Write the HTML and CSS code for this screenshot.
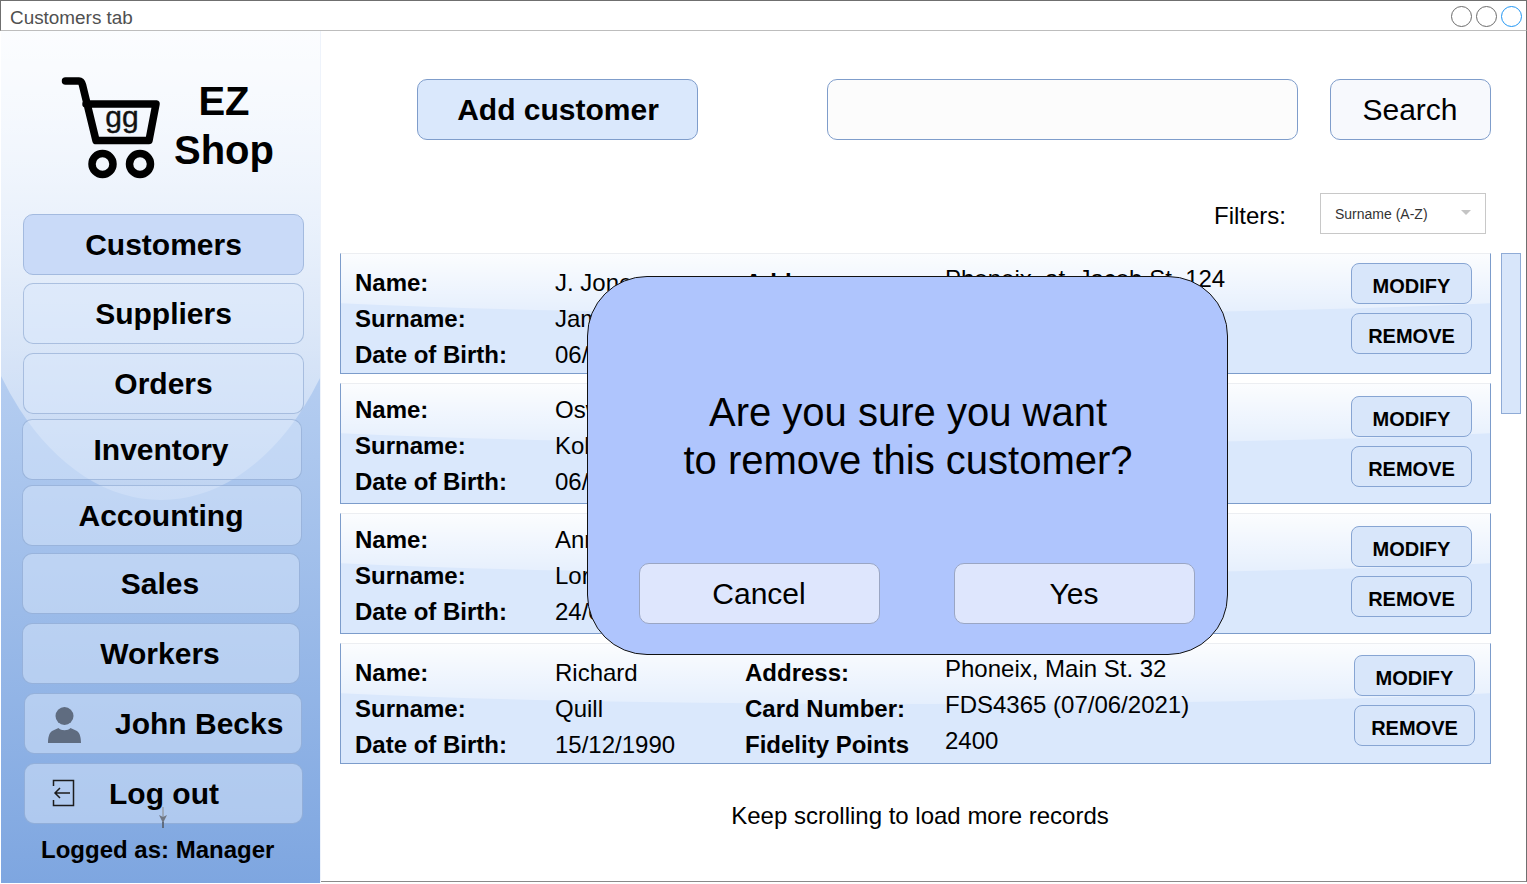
FILE: index.html
```html
<!DOCTYPE html>
<html lang="en">
<head>
<meta charset="utf-8">
<title>Customers tab</title>
<link rel="stylesheet" href="styles.css">
</head>
<body>
<div class="window">
  <header class="titlebar">
    <span class="title">Customers tab</span>
    <div class="win-controls">
      <span class="win-dot"></span>
      <span class="win-dot"></span>
      <span class="win-dot win-dot-active"></span>
    </div>
  </header>
  <div class="content">
    <aside class="sidebar">
      <div class="brand">
        <svg class="cart" viewBox="61 76 100 103" width="100" height="103" aria-hidden="true">
          <path class="cart-line" d="M65.5 80H79Q81.500 80 82.500 84L96 139.500H149L156 103H86"/>
          <circle class="cart-line" cx="102.500" cy="163" r="10.500"/>
          <circle class="cart-line" cx="140" cy="163" r="10.500"/>
          <text class="cart-text" x="122" y="126" text-anchor="middle">gg</text>
        </svg>
        <div class="brand-name">EZ<br>Shop</div>
      </div>
      <nav class="nav">
        <a class="nav-item nav-active">Customers</a>
        <a class="nav-item nav-suppliers">Suppliers</a>
        <a class="nav-item nav-orders">Orders</a>
        <a class="nav-item nav-inventory">Inventory</a>
        <a class="nav-item nav-accounting">Accounting</a>
        <a class="nav-item nav-sales">Sales</a>
        <a class="nav-item nav-workers">Workers</a>
        <a class="nav-item nav-user">
          <svg class="user-icon" viewBox="0 0 33 36" width="33" height="36" aria-hidden="true">
            <circle cx="16.500" cy="9" r="9"/>
            <path d="M0 36C0 31 1 26 4 24L10.500 21C13 24 20 24 22.500 21L29 24C32 26 33 31 33 36Z"/>
          </svg>
          <span>John Becks</span>
        </a>
        <a class="nav-item nav-logout">
          <svg class="logout-icon" viewBox="0 0 23 28" width="23" height="28" aria-hidden="true">
            <path d="M1.500 7V1.500H21.500V26.500H1.500V21"/>
            <path d="M18 14H3M8 9L3 14L8 19"/>
          </svg>
          <span>Log out</span>
          <svg class="stray-arrow" viewBox="0 0 8 22" width="8" height="22" aria-hidden="true">
            <path class="stray-stem" d="M4 0V15"/>
            <path class="stray-head" d="M0 8L4 10L8 8L4 16Z"/>
            <path class="stray-tail" d="M4 15V21"/>
          </svg>
        </a>
      </nav>
      <div class="logged">Logged as: Manager</div>
    </aside>

    <main class="main">
      <div class="toolbar">
        <button class="btn-add">Add customer</button>
        <div class="search-input"></div>
        <button class="btn-search">Search</button>
      </div>
      <div class="filters">
        <span class="filters-label">Filters:</span>
        <div class="select">
          <span>Surname (A-Z)</span>
          <span class="select-arrow"></span>
        </div>
      </div>
      <div class="list-wrap">
        <div class="list">
          <article class="record">
            <div class="fields">
              <b>Name:</b><span>J. Jones</span><b>Address:</b><span class="raised">Phoneix, at. Jacob St. 124</span>
              <b>Surname:</b><span>James</span><b>Card Number:</b><span class="raised">FDS4365 (07/06/2021)</span>
              <b>Date of Birth:</b><span>06/06/1980</span><b>Fidelity Points</b><span class="raised">2400</span>
            </div>
            <div class="actions">
              <button class="btn-row">MODIFY</button>
              <button class="btn-row">REMOVE</button>
            </div>
          </article>
          <article class="record record-b">
            <div class="fields">
              <b>Name:</b><span>Oswald</span><b>Address:</b><span class="raised">Phoneix, Main St. 32</span>
              <b>Surname:</b><span>Kolt</span><b>Card Number:</b><span class="raised">FDS4365 (07/06/2021)</span>
              <b>Date of Birth:</b><span>06/06/1980</span><b>Fidelity Points</b><span class="raised">2400</span>
            </div>
            <div class="actions">
              <button class="btn-row">MODIFY</button>
              <button class="btn-row">REMOVE</button>
            </div>
          </article>
          <article class="record record-b">
            <div class="fields">
              <b>Name:</b><span>Anna</span><b>Address:</b><span class="raised">Phoneix, Main St. 32</span>
              <b>Surname:</b><span>Lorn</span><b>Card Number:</b><span class="raised">FDS4365 (07/06/2021)</span>
              <b>Date of Birth:</b><span>24/06/1980</span><b>Fidelity Points</b><span class="raised">2400</span>
            </div>
            <div class="actions">
              <button class="btn-row">MODIFY</button>
              <button class="btn-row">REMOVE</button>
            </div>
          </article>
          <article class="record record-d">
            <div class="fields">
              <b>Name:</b><span>Richard</span><b>Address:</b><span class="raised">Phoneix, Main St. 32</span>
              <b>Surname:</b><span>Quill</span><b>Card Number:</b><span class="raised">FDS4365 (07/06/2021)</span>
              <b>Date of Birth:</b><span>15/12/1990</span><b>Fidelity Points</b><span class="raised">2400</span>
            </div>
            <div class="actions">
              <button class="btn-row">MODIFY</button>
              <button class="btn-row">REMOVE</button>
            </div>
          </article>
        </div>
        <div class="scrollbar"></div>
      </div>
      <p class="more">Keep scrolling to load more records</p>

      <div class="modal" role="dialog">
        <p class="modal-text">Are you sure you want<br>to remove this customer?</p>
        <div class="modal-actions">
          <button class="btn-modal">Cancel</button>
          <button class="btn-modal">Yes</button>
        </div>
      </div>
    </main>
  </div>
</div>
</body>
</html>
```
FILE: styles.css
```css
* { box-sizing: border-box; }
html, body { margin: 0; height: 100%; }
body {
  background: #fff;
  color: #000;
  font-family: "Liberation Sans", Arial, sans-serif;
  overflow: hidden;
}
button { font-family: inherit; color: inherit; padding: 0; cursor: default; }

.window { height: 884px; display: flex; flex-direction: column; }

.titlebar {
  height: 31px;
  flex: none;
  display: flex;
  align-items: center;
  justify-content: space-between;
  border-top: 1px solid #6f6f6f;
  border-left: 1px solid #6f6f6f;
  border-right: 1px solid #6f6f6f;
  border-bottom: 1px solid #bdbdbd;
  padding: 4px 4px 0 9px;
}
.title { font-size: 18.9px; color: #505050; }
.win-controls { display: flex; gap: 4px; margin-top: -3px; }
.win-dot { width: 21px; height: 21px; border: 1px solid #6b6b6b; border-radius: 50%; background: #fff; }
.win-dot-active { border-color: #2196f3; }

.content { flex: 1; display: flex; min-height: 0; }

/* Sidebar */
.sidebar {
  position: relative;
  width: 321px;
  height: 852px;
  flex: none;
  overflow: hidden;
  border-left: 1px solid #fff;
  border-right: 1px solid #eef3fb;
  background: linear-gradient(#dae8fc, #7ea6e0);
}
.sidebar::before {
  content: "";
  position: absolute;
  left: -40px; top: 0;
  width: 400px;
  height: 469px;
  border-radius: 0 0 200px 200px / 0 0 310px 310px;
  background: linear-gradient(rgba(255,255,255,.9), rgba(255,255,255,.25));
}
.brand {
  position: relative;
  height: 183px;
  display: flex;
  align-items: flex-start;
  padding: 46px 0 0 60px;
}
.cart-line { fill: none; stroke: #000; stroke-width: 7.5; stroke-linecap: round; stroke-linejoin: round; }
.cart-text { font-size: 30px; fill: #111; stroke: #111; stroke-width: .4; }
.brand-name {
  width: 100px;
  margin-left: 13px;
  font-size: 40px;
  line-height: 49px;
  font-weight: 700;
  text-align: center;
}

.nav { position: relative; display: flex; flex-direction: column; }
.nav-item {
  height: 61px;
  width: 281px;
  margin-left: 22px;
  display: flex;
  align-items: center;
  justify-content: center;
  font-size: 30px;
  font-weight: 700;
  border: 1px solid rgba(108,142,191,.45);
  border-radius: 10px;
  background: rgba(218,232,252,.5);
}
.nav-active { background: #c9daf8; border-color: #a3badf; }
.nav-suppliers { margin-top: 8px; }
.nav-orders { margin-top: 9px; }
.nav-inventory { margin: 5px 0 0 21px; width: 280px; padding-right: 2px; }
.nav-accounting { margin: 5px 0 0 21px; width: 280px; padding-right: 2px; }
.nav-sales { margin: 7px 0 0 21px; width: 278px; padding-right: 2px; }
.nav-workers { margin: 9px 0 0 21px; width: 278px; padding-right: 2px; }
.nav-user {
  margin: 9px 0 0 23px; width: 278px;
  justify-content: flex-start;
  padding-left: 23px;
  gap: 34px;
}
.nav-logout {
  position: relative;
  margin: 9px 0 0 23px; width: 279px;
  justify-content: flex-start;
  padding-left: 27px;
  gap: 34px;
  font-size: 30px;
}
.user-icon { fill: #5f6c80; flex: none; margin-top: 2px; }
.logout-icon { fill: none; stroke: #1c1c1c; stroke-width: 1.5; flex: none; margin-top: -1px; }
.stray-arrow { position: absolute; left: 134px; top: 43px; }
.stray-stem { stroke: #8a8a8a; fill: none; stroke-width: 1; }
.stray-head { fill: #707784; }
.stray-tail { stroke: #5f6c80; fill: none; stroke-width: 2; }

.logged {
  position: relative;
  margin-top: 8px;
  margin-left: 40px;
  font-size: 24px;
  line-height: 36px;
  font-weight: 700;
  white-space: nowrap;
}

/* Main */
.main {
  position: relative;
  flex: 1;
  height: 851px;
  border-right: 1px solid #6f6f6f;
  border-bottom: 1px solid #8a8a8a;
}
.toolbar { display: flex; padding: 48px 0 0 96px; }
.btn-add {
  width: 281px; height: 61px;
  padding-left: 1px;
  font-size: 30px; font-weight: 700;
  background: #dae8fc;
  border: 1px solid #7f9dcb;
  border-radius: 10px;
}
.search-input {
  width: 471px; height: 61px;
  margin-left: 129px;
  background: #fcfcfc;
  border: 1px solid #7f9dcb;
  border-radius: 10px;
}
.btn-search {
  width: 161px; height: 61px;
  margin-left: 32px;
  padding-right: 1px;
  font-size: 30px;
  background: #f7f9fd;
  border: 1px solid #7f9dcb;
  border-radius: 10px;
}
.filters {
  display: flex;
  align-items: center;
  justify-content: flex-end;
  margin-top: 53px;
  padding-right: 40px;
  height: 41px;
}
.filters-label { font-size: 24px; margin-right: 34px; position: relative; top: 2px; }
.select {
  width: 166px; height: 41px;
  display: flex;
  align-items: center;
  justify-content: space-between;
  padding: 0 14px;
  border: 1px solid #c8c8c8;
  font-size: 14px;
  color: #333;
  background: #fff;
}
.select-arrow {
  width: 0; height: 0;
  margin-top: -2px;
  border-left: 5px solid transparent;
  border-right: 5px solid transparent;
  border-top: 5px solid #c4c4c4;
}

.list-wrap { display: flex; gap: 10px; margin-top: 19px; padding-left: 19px; }
.list { width: 1151px; display: flex; flex-direction: column; gap: 9px; }
.scrollbar {
  width: 20px; height: 161px;
  background: #d8e6fa;
  border: 1px solid #8fabd6;
}

.record {
  position: relative;
  height: 121px;
  display: flex;
  justify-content: space-between;
  overflow: hidden;
  padding: 9px 18px 0 14px;
  background: #dae8fc;
  border: 1px solid #7c9ccb;
  border-top-color: #eceef2;
}
.record::before {
  content: "";
  position: absolute;
  left: -15%; top: 0;
  width: 130%;
  height: 60px;
  border-radius: 0 0 50% 50% / 0 0 30px 30px;
  background: linear-gradient(rgba(255,255,255,.9), rgba(255,255,255,.3));
}
.record-b { padding-top: 12px; }
.record-d { padding: 11px 15px 0 14px; }

.fields {
  position: relative;
  display: grid;
  grid-template-columns: 200px 190px 200px auto;
  grid-auto-rows: 36px;
  align-items: center;
  align-content: start;
  font-size: 24px;
  white-space: nowrap;
  margin-top: 2px;
}
.record-b .fields { margin-top: -4px; }
.record-d .fields { margin-top: 0; }
.fields b { font-weight: 700; }
.raised { margin-bottom: 8px; }

.actions { position: relative; display: flex; flex-direction: column; gap: 9px; }
.btn-row {
  width: 121px; height: 41px;
  padding-top: 5px;
  font-size: 20px;
  font-weight: 700;
  background: #d8e6fa;
  border: 1px solid #87a5d3;
  border-radius: 8px;
}

.more {
  margin: 36px 0 0 0;
  padding-left: 198px;
  width: 1000px;
  text-align: center;
  font-size: 24px;
  line-height: 32px;
}

/* Modal */
.modal {
  position: absolute;
  left: 266px; top: 245px;
  width: 641px; height: 379px;
  display: flex;
  flex-direction: column;
  align-items: center;
  background: #afc5fd;
  border: 1px solid #111;
  border-radius: 60px;
}
.modal-text {
  margin: 111px 0 0;
  padding-left: 1px;
  font-size: 40px;
  line-height: 48px;
  text-align: center;
}
.modal-actions { display: flex; gap: 74px; margin: 79px 0 0 18px; }
.btn-modal {
  width: 241px; height: 61px;
  font-size: 30px;
  background: #dee6fd;
  border: 1px solid #9aa6c4;
  border-radius: 10px;
}
```
